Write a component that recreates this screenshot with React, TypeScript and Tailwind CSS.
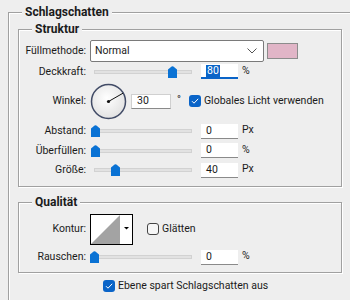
import React from "react";

function Group({ title, className, children }: { title: string; className?: string; children: React.ReactNode }) {
  return (
    <fieldset
      className={`w-[324px] border border-[#a0a0a0] shadow-[inset_1px_1px_0_#fff,1px_1px_0_#fff] ${className ?? ""}`}
    >
      <legend className="ml-[13px] px-[3px] font-bold text-[12px] leading-[14px] bg-[#eeeeee]">{title}</legend>
      {children}
    </fieldset>
  );
}

function Label({ children }: { children: React.ReactNode }) {
  return <span className="w-[67px] shrink-0 text-right whitespace-nowrap">{children}</span>;
}

function Slider({ at }: { at: number }) {
  return (
    <div className="relative ml-[4px] w-[107px] h-[14px] shrink-0">
      <div className="absolute left-[4px] top-[5px] w-[98px] h-[4px] bg-[#e2e2e2] border border-[#d2d2d2]" />
      <svg className="absolute top-[1px]" style={{ left: at }} width="9" height="12" viewBox="0 0 9 12">
        <path d="M3.6 0.6 Q4.5 0 5.4 0.6 L9 3.6 V12 H0 V3.6 Z" fill="#0a72d4" />
      </svg>
    </div>
  );
}

function Field({ value, unit, active }: { value: string; unit: string; active?: boolean }) {
  return (
    <>
      <div
        className={`ml-[4px] w-[37px] h-[15px] bg-white flex items-center pl-[5px] shrink-0 ${
          active ? "border-b-2 border-[#0a64c8]" : "border-b border-[#8a8a8a]"
        }`}
      >
        {active ? <span className="bg-[#0a64c8] text-white px-[1px] leading-[12px]">{value}</span> : value}
      </div>
      <span className="ml-[4px] self-start mt-[1px]">{unit}</span>
    </>
  );
}

function Check({ on }: { on: boolean }) {
  if (!on)
    return <span className="block w-[12px] h-[12px] rounded-[3px] border border-[#444] bg-[#f6f6f6] shrink-0" />;
  return (
    <svg width="12" height="12" viewBox="0 0 12 12" className="block shrink-0">
      <rect width="12" height="12" rx="3" fill="#0a64c8" />
      <path d="M3 6.2 L5 8.2 L9.2 3.8" fill="none" stroke="#fff" strokeWidth="1" />
    </svg>
  );
}

export default function App() {
  return (
    <div className="w-[350px] h-[300px] overflow-hidden bg-[#eeeeee] text-[10.5px] text-[#1b1b1b] font-['Roboto',sans-serif] pt-[5px]">
      <fieldset className="ml-[8px] w-[400px] h-[330px] border border-[#a0a0a0] shadow-[inset_1px_1px_0_#fff]">
        <legend className="ml-[13px] px-[3px] font-bold text-[12px] leading-[14px] bg-[#eeeeee]">Schlagschatten</legend>
        <div className="pl-[9px] pt-[3px]">
          <Group title="Struktur" className="pb-[6px]">
            <div className="pt-[4px] flex flex-col">
              <div className="flex items-center h-[22px]">
                <Label>Füllmethode:</Label>
                <div className="ml-[4px] w-[174px] h-[22px] bg-white border border-[#7a7a7a] rounded-[2px] flex items-center justify-between pl-[4px] pr-[6px]">
                  <span>Normal</span>
                  <svg width="10" height="6" viewBox="0 0 10 6">
                    <path d="M0.5 0.5 L5 5 L9.5 0.5" fill="none" stroke="#555" strokeWidth="1" />
                  </svg>
                </div>
                <div className="ml-[3px] w-[31px] h-[16px] bg-[#e1b5c7] border-[1.5px] border-[#8c8c8c]" />
              </div>
              <div className="flex items-center h-[19px]">
                <Label>Deckkraft:</Label>
                <Slider at={78} />
                <Field value="80" unit="%" active />
              </div>
              <div className="flex items-center h-[40px]">
                <Label>Winkel:</Label>
                <svg className="ml-[4px] shrink-0" width="37" height="37" viewBox="0 0 37 37">
                  <defs>
                    <radialGradient id="dial" cx="45%" cy="40%" r="60%">
                      <stop offset="0%" stopColor="#ffffff" />
                      <stop offset="100%" stopColor="#e2e2e2" />
                    </radialGradient>
                  </defs>
                  <circle cx="18.5" cy="18.5" r="17" fill="url(#dial)" stroke="#414b66" strokeWidth="1.5" />
                  <line x1="18.5" y1="18.5" x2="33" y2="10.2" stroke="#111" strokeWidth="1" />
                  <circle cx="18.5" cy="18.5" r="1.6" fill="#111" />
                </svg>
                <div className="ml-[4px] w-[40px] h-[15px] bg-white border border-[#d0d0d0] border-b-[#8a8a8a] flex items-center pl-[5px]">
                  30
                </div>
                <span className="ml-[6px] self-start mt-[11px]">°</span>
                <span className="ml-[8px]">
                  <Check on />
                </span>
                <span className="ml-[3px] whitespace-nowrap">Globales Licht verwenden</span>
              </div>
              <div className="flex items-center h-[20px]">
                <Label>Abstand:</Label>
                <Slider at={1} />
                <Field value="0" unit="Px" />
              </div>
              <div className="flex items-center h-[19px]">
                <Label>Überfüllen:</Label>
                <Slider at={1} />
                <Field value="0" unit="%" />
              </div>
              <div className="flex items-center h-[20px]">
                <Label>Größe:</Label>
                <Slider at={21} />
                <Field value="40" unit="Px" />
              </div>
            </div>
          </Group>

          <Group title="Qualität" className="mt-[8px] pb-[5px]">
            <div className="pt-[5px] flex flex-col">
              <div className="flex items-center h-[30px]">
                <Label>Kontur:</Label>
                <svg className="ml-[4px] shrink-0" width="43" height="31" viewBox="0 0 43 31">
                  <rect x="0.5" y="0.5" width="42" height="30" fill="#fff" stroke="#000" />
                  <polygon points="1,30 30,1 30,30" fill="#a3a3a3" />
                  <polygon points="34,13 39,13 36.5,15.5" fill="#000" />
                </svg>
                <span className="ml-[14px]">
                  <Check on={false} />
                </span>
                <span className="ml-[3px]">Glätten</span>
              </div>
              <div className="flex items-center h-[20px] mt-[3px]">
                <Label>Rauschen:</Label>
                <Slider at={0} />
                <Field value="0" unit="%" />
              </div>
            </div>
          </Group>

          <div className="mt-[6px] ml-[85px] flex items-center h-[13px]">
            <Check on />
            <span className="ml-[3px] whitespace-nowrap">Ebene spart Schlagschatten aus</span>
          </div>
        </div>
      </fieldset>
    </div>
  );
}
